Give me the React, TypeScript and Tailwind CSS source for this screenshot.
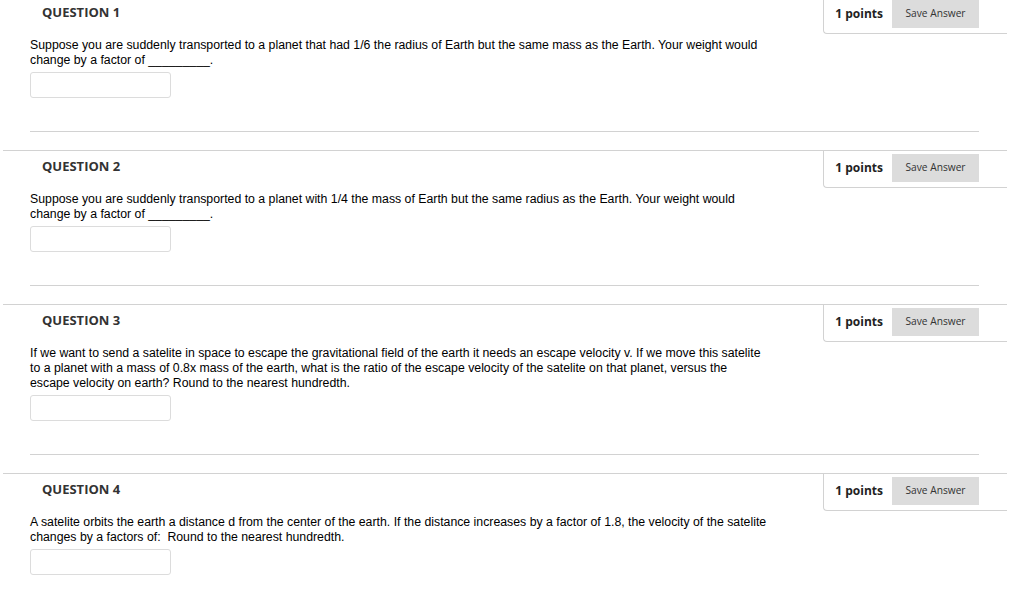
const questions = [
  {
    n: 1,
    lines: [
      "Suppose you are suddenly transported to a planet that had 1/6 the radius of Earth but the same mass as the Earth. Your weight would",
      "change by a factor of _________.",
    ],
  },
  {
    n: 2,
    lines: [
      "Suppose you are suddenly transported to a planet with 1/4 the mass of Earth but the same radius as the Earth. Your weight would",
      "change by a factor of _________.",
    ],
  },
  {
    n: 3,
    lines: [
      "If we want to send a satelite in space to escape the gravitational field of the earth it needs an escape velocity v. If we move this satelite",
      "to a planet with a mass of 0.8x mass of the earth, what is the ratio of the escape velocity of the satelite on that planet, versus the",
      "escape velocity on earth? Round to the nearest hundredth.",
    ],
  },
  {
    n: 4,
    lines: [
      "A satelite orbits the earth a distance d from the center of the earth. If the distance increases by a factor of 1.8, the velocity of the satelite",
      "changes by a factors of:  Round to the nearest hundredth.",
    ],
  },
];

const Question = ({ n, lines }: { n: number; lines: string[] }) => (
  <li className="border-t border-[#d2d2d2] pb-[18px]">
    <div className="flex items-start justify-between">
      <h3
        className="pl-[39px] pt-[6px] text-[13px] leading-[18px] font-bold text-[#333]"
        style={{ fontFamily: '"Open Sans", sans-serif' }}
      >
        QUESTION {n}
      </h3>
      <div
        className="flex items-center border-b border-l border-[#d2d2d2] rounded-bl-[4px] pt-[3px] pb-[5px] pl-[11px] pr-[28px]"
        style={{ fontFamily: '"Open Sans", sans-serif' }}
      >
        <span className="text-[12px] font-bold text-[#222] mr-[9px]">1 points</span>
        <button className="h-[28px] w-[87px] bg-[#dcdcdc] text-[10.2px] text-[#333]">
          Save Answer
        </button>
      </div>
    </div>
    <div className="pl-[27px] pr-[28px]">
      <p
        className="mt-[4px] text-[12.3px] leading-[15px] text-black whitespace-pre"
        style={{ fontFamily: '"Liberation Sans", Arial, sans-serif' }}
      >
        {lines.map((l, i) => (
          <span key={i} className="block">
            {l}
          </span>
        ))}
      </p>
      <input
        type="text"
        className="mt-[4px] block w-[141px] h-[26px] border border-[#dcdcdc] rounded-[3px] bg-white"
      />
      <div className="mt-[33px] border-t border-[#d2d2d2]" />
    </div>
  </li>
);

export default function App() {
  return (
    <div className="w-[1024px] h-[590px] overflow-hidden bg-white">
      <ul className="ml-[3px] w-[1004px] -mt-[4px]">
        {questions.map((q) => (
          <Question key={q.n} n={q.n} lines={q.lines} />
        ))}
      </ul>
    </div>
  );
}
